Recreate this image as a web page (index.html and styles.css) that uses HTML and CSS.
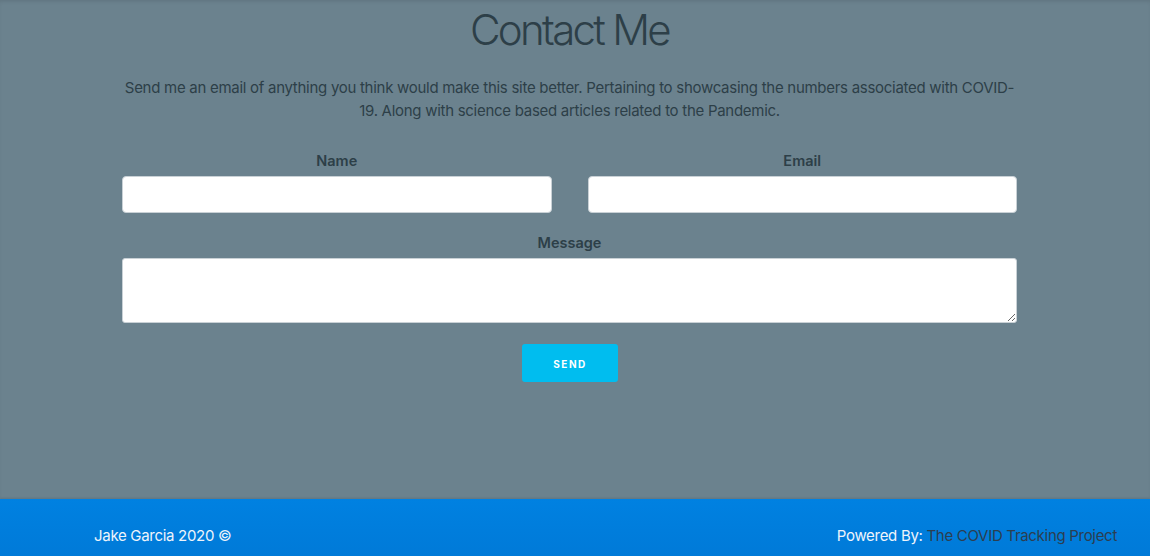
FILE: index.html
```html
<!DOCTYPE html>
<html lang="en">
<head>
<meta charset="utf-8">
<title>Contact Me</title>
<link rel="stylesheet" href="styles.css">
</head>
<body>
<main class="contact">
  <h1 class="contact-title">Contact Me</h1>
  <p class="contact-intro">Send me an email of anything you think would make this site better. Pertaining to showcasing the numbers associated with COVID-19. Along with science based articles related to the Pandemic.</p>
  <form class="contact-form">
    <div class="form-row">
      <div class="field">
        <label class="field-label" for="name">Name</label>
        <input class="field-input" id="name" type="text">
      </div>
      <div class="field">
        <label class="field-label" for="email">Email</label>
        <input class="field-input" id="email" type="email">
      </div>
    </div>
    <div class="field">
      <label class="field-label" for="message">Message</label>
      <textarea class="field-textarea" id="message"></textarea>
    </div>
    <div class="form-actions">
      <button class="send-btn" type="button">SEND</button>
    </div>
  </form>
</main>
<footer class="site-footer">
  <span class="footer-copy">Jake Garcia 2020 ©</span>
  <span class="footer-powered">Powered By: <a class="footer-link" href="#">The COVID Tracking Project</a></span>
</footer>
</body>
</html>
```
FILE: styles.css
```css
* { box-sizing: border-box; }
html, body { margin: 0; padding: 0; }
body {
  font-family: Inter, "Noto Sans", sans-serif;
  background: #6b828e;
  color: #2c3e48;
}
.contact {
  height: 499px;
  padding: 5px 133px 0 122px;
  box-shadow: inset 0 3px 4px -2px rgba(0,0,0,0.12);
}
.contact-title {
  margin: 0;
  font-size: 42px;
  font-weight: 300;
  line-height: 50px;
  text-align: center;
  letter-spacing: -2.7px;
  color: #2d3f48;
}
.contact-intro {
  margin: 21px -2px 0;
  font-size: 15px;
  line-height: 23px;
  text-align: center;
  letter-spacing: -0.28px;
  color: #2d3f48;
}
.contact-form {
  margin-top: 28px;
}
.form-row {
  display: grid;
  grid-template-columns: 1fr 1fr;
  column-gap: 36px;
}
.field {
  display: flex;
  flex-direction: column;
  align-items: stretch;
}
.field-label {
  text-align: center;
  font-size: 14.5px;
  font-weight: 600;
  line-height: 20px;
  padding-top: 1px;
  margin-bottom: 5px;
  color: #2d3f48;
}
.form-row + .field { margin-top: 19px; }
.field-input {
  height: 37px;
  border: 1px solid #c9d1d6;
  border-radius: 4px;
  background: #fff;
  font: inherit;
}
.field-textarea {
  height: 65px;
  border: 1px solid #c9d1d6;
  border-radius: 3px;
  background: #fff;
  font: inherit;
  resize: vertical;
}
.form-actions {
  display: flex;
  justify-content: center;
  margin-top: 21px;
}
.send-btn {
  width: 96px;
  height: 38px;
  border: none;
  border-radius: 3px;
  background: #00bdef;
  color: #fff;
  font-family: Inter, sans-serif;
  font-size: 10px;
  font-weight: 700;
  letter-spacing: 1.5px;
  padding: 2px 0 0;
  margin-left: 1px;
}
.site-footer {
  height: 57px;
  background: linear-gradient(#0081e1, #007ad8);
  box-shadow: 0 -1px 2px rgba(0,0,0,0.1);
  display: flex;
  justify-content: space-between;
  align-items: flex-start;
  padding: 27px 33px 0 94px;
  font-size: 15px;
  line-height: 20px;
  letter-spacing: -0.3px;
  color: #eef4fb;
}
.footer-link {
  color: #2c3e50;
  text-decoration: none;
}
```
